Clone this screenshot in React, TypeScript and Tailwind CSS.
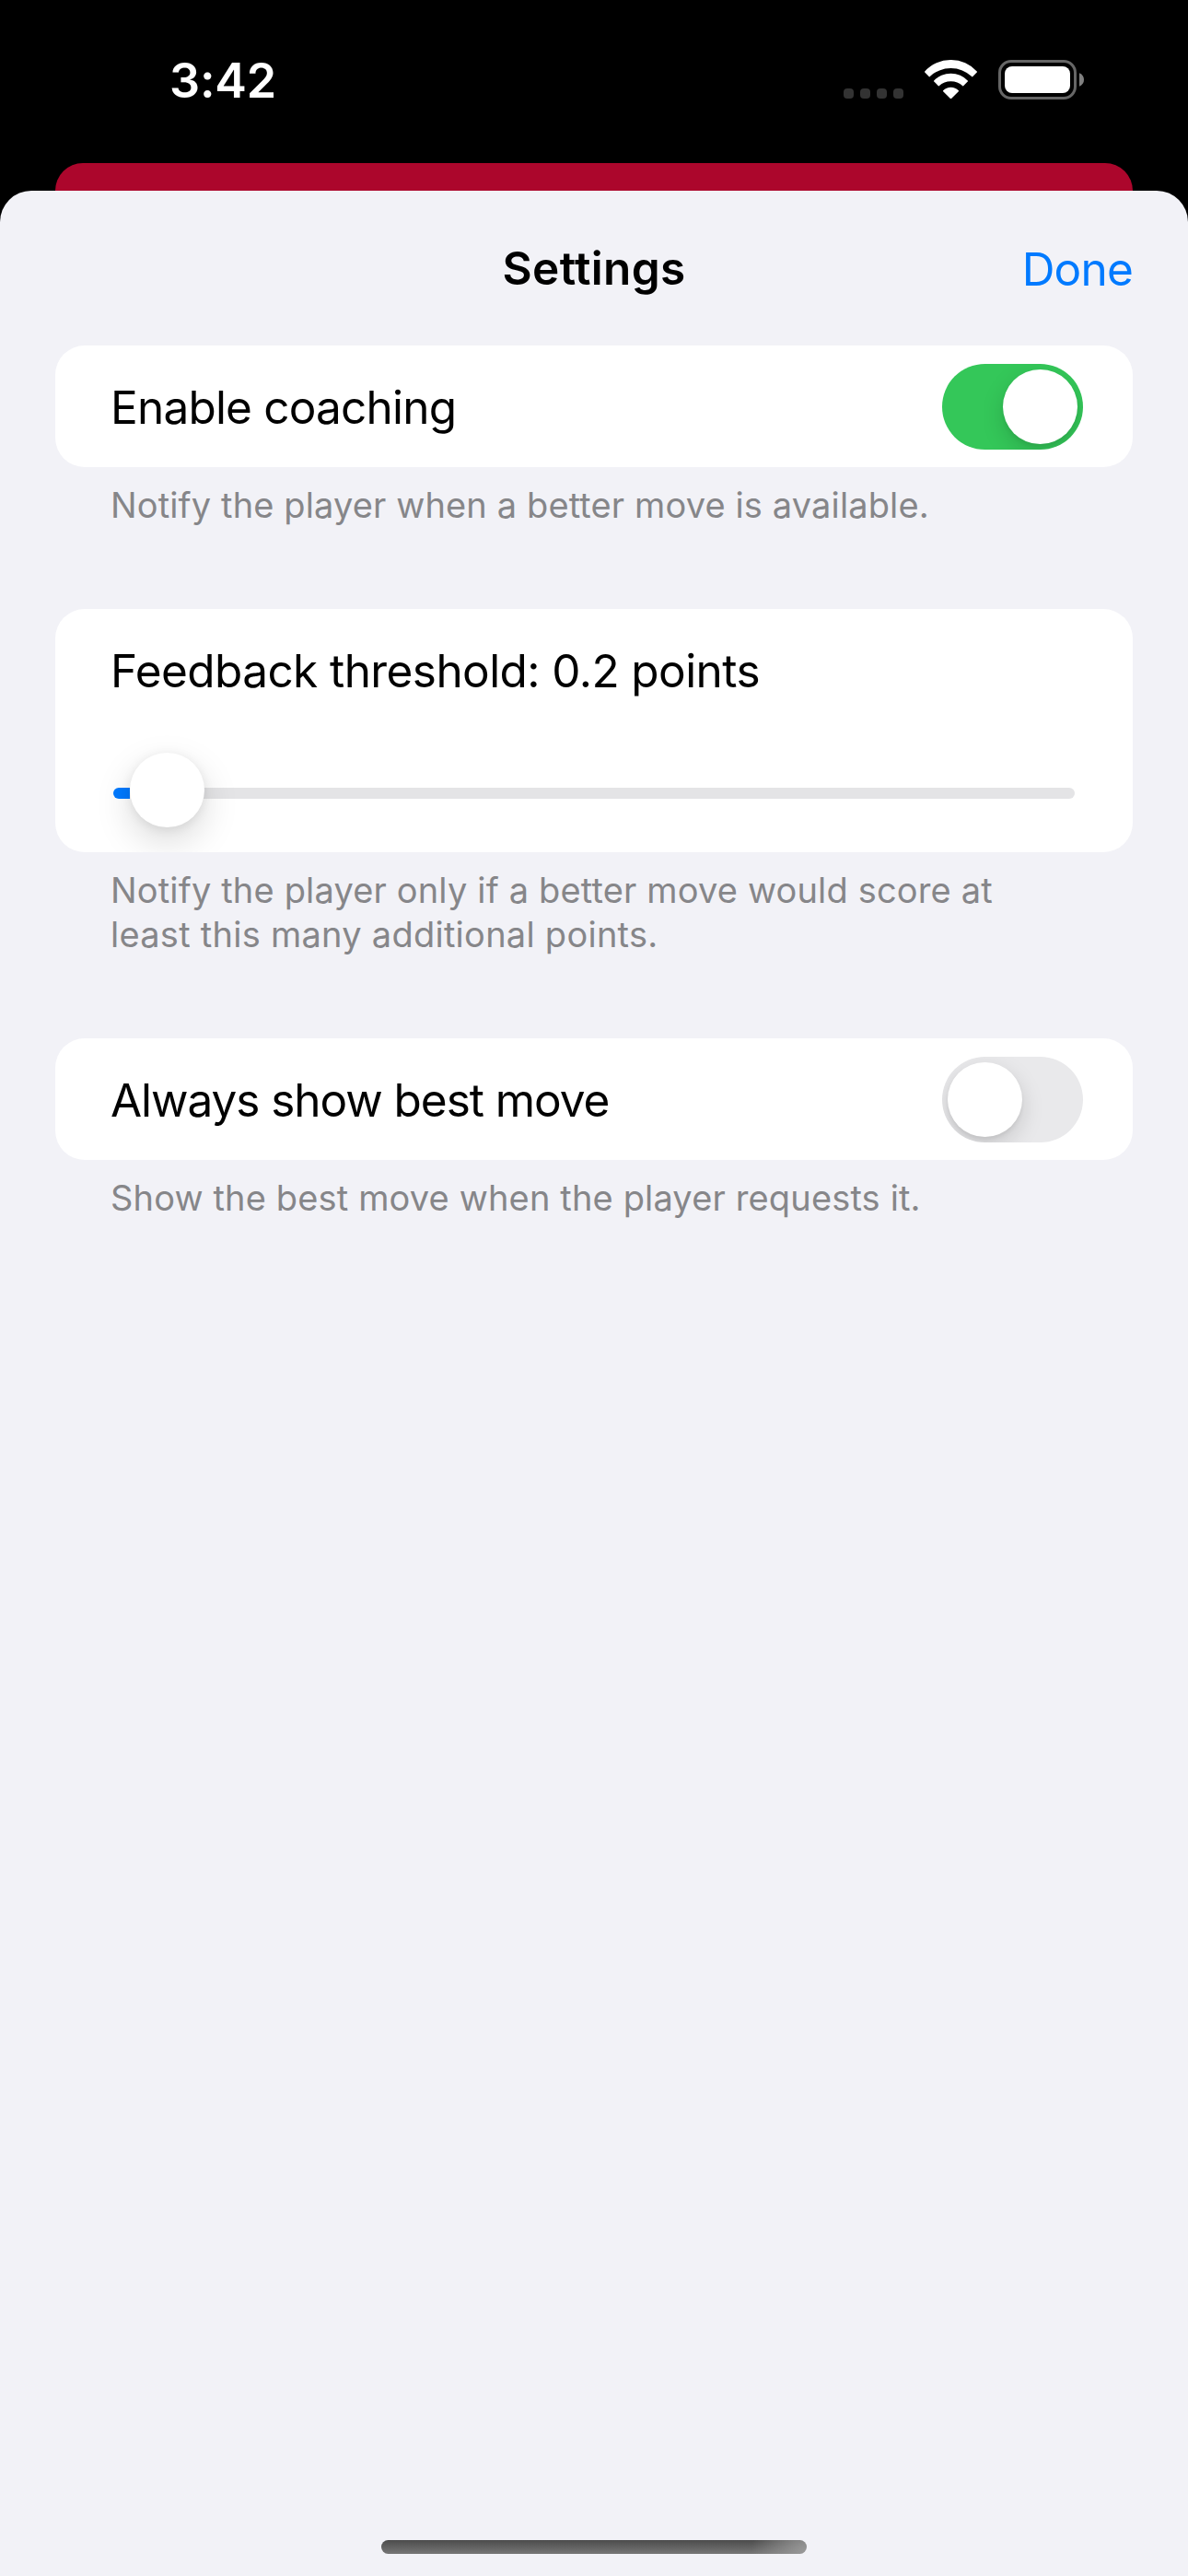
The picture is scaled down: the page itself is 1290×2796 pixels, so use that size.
import type { ReactNode } from "react";

function WifiIcon() {
  return (
    <svg className="h-[42.4px] w-[57px]" viewBox="372 75 171 127" fill="#fff">
      <path d="M372 113A115 115 0 0 1 543 113Q544 114 543 115L529 129Q528 131 526.5 129.5A100 100 0 0 0 388.500 129.500Q387 131 386 129L372 115Q371 114 372 113Z" />
      <path d="M402 143A76 76 0 0 1 513 143Q514 144 513 145L499 159Q497.500 161 496 159.500A57 57 0 0 0 419 159.500Q417.500 161 416 159L402 145Q401 144 402 143Z" />
      <path d="M432.500 175A34 34 0 0 1 482.500 175Q484 176.500 482.500 178L459 201Q457.500 202.500 456 201L432.500 178Q431 176.500 432.500 175Z" />
    </svg>
  );
}

function BatteryIcon() {
  return (
    <svg className="h-[43px] w-[93px]" viewBox="0 0 93 43">
      <rect x="1.500" y="1.500" width="82" height="40" rx="12.500" fill="none" stroke="#666" strokeWidth="3" />
      <rect x="7" y="7" width="71" height="29" rx="8" fill="#fff" />
      <path d="M88 14.300Q93 16.500 93 21.500T88 28.700Z" fill="#808080" />
    </svg>
  );
}

function StatusBar() {
  return (
    <div className="flex h-[177px] items-start justify-between pl-[184px] pr-[113px] text-white">
      <span className="mt-[58px] text-[52px] leading-[60px] font-semibold tracking-[-0.2px]">3:42</span>
      <div className="mt-[65px] flex items-start">
        <div className="mt-[31px] flex gap-[7px]">
          {[0, 1, 2, 3].map((i) => (
            <span key={i} className="size-[11px] rounded-[4px] bg-[#333]" />
          ))}
        </div>
        <div className="ml-[23px]">
          <WifiIcon />
        </div>
        <div className="ml-[23px]">
          <BatteryIcon />
        </div>
      </div>
    </div>
  );
}

function Toggle({ on }: { on: boolean }) {
  return (
    <button
      role="switch"
      aria-checked={on}
      className={`mt-px flex h-[93px] w-[153px] overflow-hidden rounded-full p-[6px] ${
        on ? "justify-end bg-[#34c759]" : "justify-start bg-[#e9e9eb]"
      }`}
    >
      <span className="size-[81px] rounded-full bg-white shadow-[0_9px_24px_rgba(0,0,0,0.15),0_3px_4px_rgba(0,0,0,0.06)]" />
    </button>
  );
}

function Section({ children, footer }: { children: ReactNode; footer: ReactNode }) {
  return (
    <section className="mb-[89px]">
      <div className="overflow-hidden rounded-[32px] bg-white">{children}</div>
      <div className="mt-[17px] pl-[60px] text-[38px] leading-[48px] whitespace-nowrap text-[#868689]">{footer}</div>
    </section>
  );
}

export default function App() {
  return (
    <div className="flex h-[2796px] w-[1290px] flex-col overflow-hidden bg-black font-['Inter',sans-serif] text-black">
      <StatusBar />
      <div className="mx-[60px] h-[80px] shrink-0 rounded-t-[30px] bg-[#ac062c]" />
      <div className="-mt-[50px] flex flex-1 flex-col rounded-t-[34px] bg-[#f2f2f7] px-[60px]">
        <header className="grid h-[168px] grid-cols-3 pt-[54px] text-[49.5px] leading-[60px]">
          <h1 className="col-start-2 text-center font-semibold tracking-[0.33px]">Settings</h1>
          <button className="mt-px h-[60px] text-right tracking-[-0.8px] text-[#007aff]">Done</button>
        </header>

        <Section
          footer={<p className="tracking-[0.13px]">Notify the player when a better move is available.</p>}
        >
          <div className="flex h-[132px] items-center justify-between pr-[54px] pl-[60px]">
            <span className="pt-[2px] text-[49.5px] leading-[60px] tracking-[-0.8px]">Enable coaching</span>
            <Toggle on />
          </div>
        </Section>

        <Section
          footer={
            <>
              <p className="tracking-[0.16px]">Notify the player only if a better move would score at</p>
              <p className="tracking-[0.26px]">least this many additional points.</p>
            </>
          }
        >
          <div className="h-[264px] px-[60px] pt-[37px]">
            <div className="text-[49.5px] leading-[60px] tracking-[-0.58px]">Feedback threshold: 0.2 points</div>
            <div className="mx-[3px] mt-[59px] flex h-[81px] items-center">
              <span className="mt-[7px] h-[12px] w-[18px] rounded-l-full bg-[#007aff]" />
              <span className="z-10 size-[81px] shrink-0 rounded-full bg-white shadow-[0_15px_39px_rgba(0,0,0,0.15),0_2px_12px_rgba(0,0,0,0.08)]" />
              <span className="mt-[7px] -ml-[20px] h-[12px] flex-1 rounded-r-full bg-[#e4e4e6]" />
            </div>
          </div>
        </Section>

        <Section
          footer={<p className="tracking-[0.15px]">Show the best move when the player requests it.</p>}
        >
          <div className="flex h-[132px] items-center justify-between pr-[54px] pl-[60px]">
            <span className="pt-[2px] text-[49.5px] leading-[60px] tracking-[-1.05px]">Always show best move</span>
            <Toggle on={false} />
          </div>
        </Section>

        <div className="mx-auto mt-auto mb-[24px] h-[15px] w-[462px] rounded-full bg-[radial-gradient(circle_at_100%_100%,#9a9a9a_0,#9a9a9a00_60px),linear-gradient(to_bottom,#4c4c4c,#767676)]" />
      </div>
    </div>
  );
}
